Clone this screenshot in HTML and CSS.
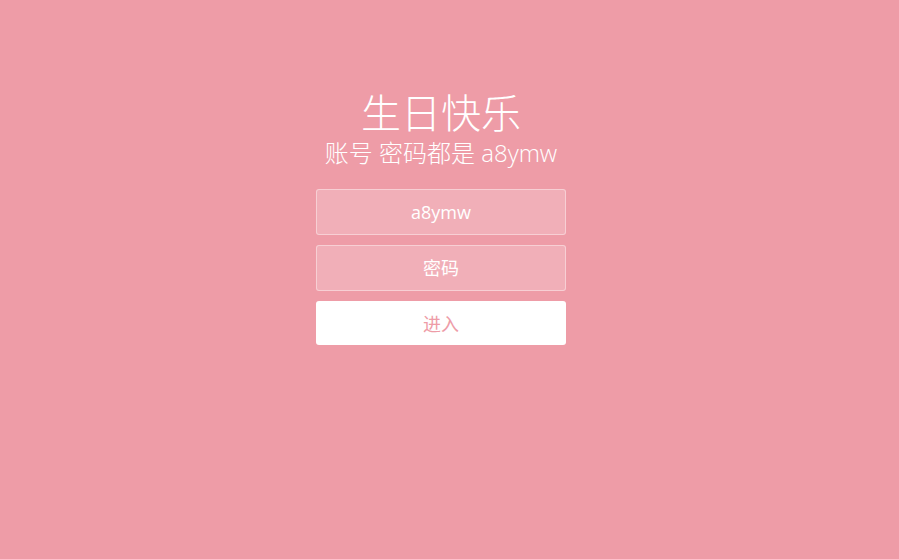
FILE: index.html
```html
<!DOCTYPE html>
<html lang="zh">
<head>
<meta charset="utf-8">
<title>生日快乐</title>
<link rel="stylesheet" href="styles.css">
</head>
<body>
<div class="page">
  <div class="wrapper">
    <h1 class="title">生日快乐</h1>
    <h2 class="subtitle">账号 密码都是 a8ymw</h2>
    <form class="form">
      <input class="field" type="text" value="a8ymw">
      <input class="field" type="password" placeholder="密码">
      <button class="submit" type="button">进入</button>
    </form>
  </div>
</div>
</body>
</html>
```
FILE: styles.css
```css
html, body {
  margin: 0;
  padding: 0;
  height: 100%;
}
body {
  background: #ee9ca7;
  font-family: "Open Sans", "Noto Sans CJK SC", sans-serif;
  font-weight: 300;
  color: #fff;
}
.page {
  width: 882px;
  height: 100%;
}
.wrapper {
  display: flex;
  flex-direction: column;
  align-items: center;
  padding-top: 88px;
}
.title {
  margin: 0;
  font-size: 40px;
  font-weight: 300;
  line-height: 50px;
}
.subtitle {
  margin: 0;
  font-size: 24px;
  font-weight: 300;
  line-height: 30px;
}
.form {
  display: flex;
  flex-direction: column;
  gap: 10px;
  margin-top: 21px;
  width: 250px;
}
.field {
  box-sizing: border-box;
  width: 250px;
  height: 46px;
  border: 1px solid rgba(255, 255, 255, 0.4);
  background: rgba(255, 255, 255, 0.2);
  border-radius: 3px;
  font-family: "Open Sans", "Noto Sans CJK SC", sans-serif;
  font-weight: 400;
  font-size: 18px;
  color: #fff;
  text-align: center;
  outline: none;
  padding: 0 15px;
}
.field::placeholder {
  color: #fff;
  opacity: 1;
}
.submit {
  box-sizing: border-box;
  width: 250px;
  height: 44px;
  border: 0;
  border-radius: 3px;
  background: #fff;
  color: #ee9ca7;
  font-family: "Open Sans", "Noto Sans CJK SC", sans-serif;
  font-weight: 400;
  font-size: 18px;
  cursor: pointer;
}
```
